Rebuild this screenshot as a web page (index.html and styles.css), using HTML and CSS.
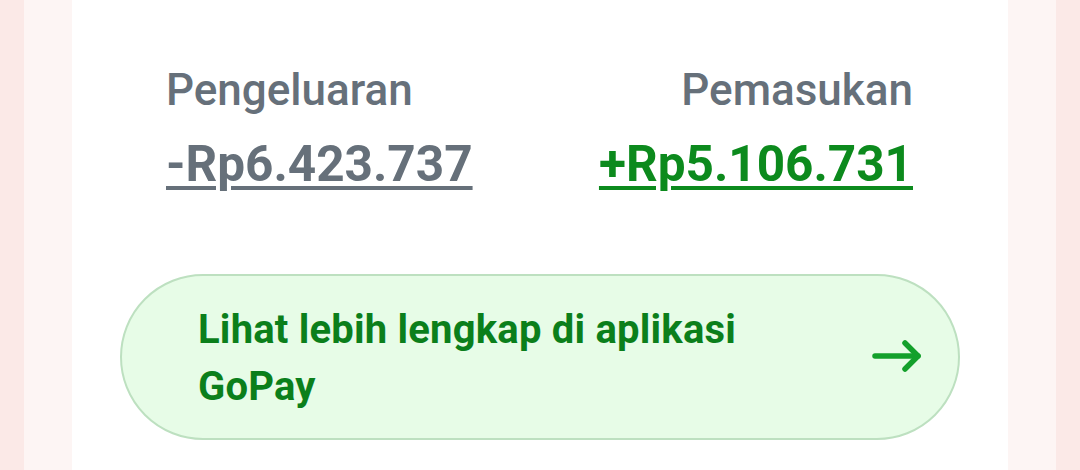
FILE: index.html
```html
<!DOCTYPE html>
<html lang="id">
<head>
  <meta charset="UTF-8">
  <meta name="viewport" content="width=device-width, initial-scale=1.0">
  <title>Ringkasan GoPay</title>
  <link rel="stylesheet" href="styles.css">
</head>
<body>

<div class="page">
  <div class="edge edge-dark"></div>
  <div class="edge edge-light"></div>

  <main class="card">
    <div class="summary">
      <div class="col">
        <div class="label">Pengeluaran</div>
        <a href="#" class="amount out">-Rp6.423.737</a>
      </div>
      <div class="col right">
        <div class="label">Pemasukan</div>
        <a href="#" class="amount in">+Rp5.106.731</a>
      </div>
    </div>

    <a href="#" class="more">
      <span class="more-text">Lihat lebih lengkap di aplikasi GoPay</span>
      <svg class="arrow" width="50" height="34" viewBox="0 0 50 34" fill="none" stroke="#13a02b" stroke-width="5.5" stroke-linecap="round" stroke-linejoin="round">
        <path d="M3 17H46"/>
        <path d="M33 4L46 17L33 30"/>
      </svg>
    </a>
  </main>

  <div class="edge edge-light"></div>
  <div class="edge edge-dark"></div>
</div>

</body>
</html>
```

FILE: styles.css
```css
body { margin: 0; padding: 0; font-family: Roboto, "Liberation Sans", sans-serif; background: #fff; }
.page { display: flex; height: 470px; overflow: hidden; }
.edge { flex: none; }
.edge-dark { width: 24px; background: #fbe9e7; }
.edge-light { width: 48px; background: #fdf5f4; }

.card { flex: 1; background: #fff; padding: 65px 48px 0; }

.summary { display: flex; justify-content: space-between; padding: 0 47px 0 46px; }
.col { display: flex; flex-direction: column; }
.col.right { align-items: flex-end; }
.label { font-size: 44px; font-weight: 500; color: #66707a; line-height: 50px; }
.amount { font-size: 49.5px; font-weight: 700; line-height: 60px; margin-top: 19px; text-decoration: underline; text-decoration-thickness: 4px; text-underline-offset: 5px; }
.amount.out { color: #66707a; }
.amount.in { color: #0c8a1d; }

.more { display: flex; align-items: center; justify-content: space-between; margin-top: 80px; height: 166px; box-sizing: border-box; padding: 2px 36px 0 76px; background: #e7fce7; border: 2px solid #bde0c0; border-radius: 84px; text-decoration: none; }
.more-text { font-size: 40px; font-weight: 700; color: #0b7f1b; line-height: 57px; letter-spacing: 0.2px; max-width: 620px; }
.arrow { flex: none; margin-top: -5px; }
```
